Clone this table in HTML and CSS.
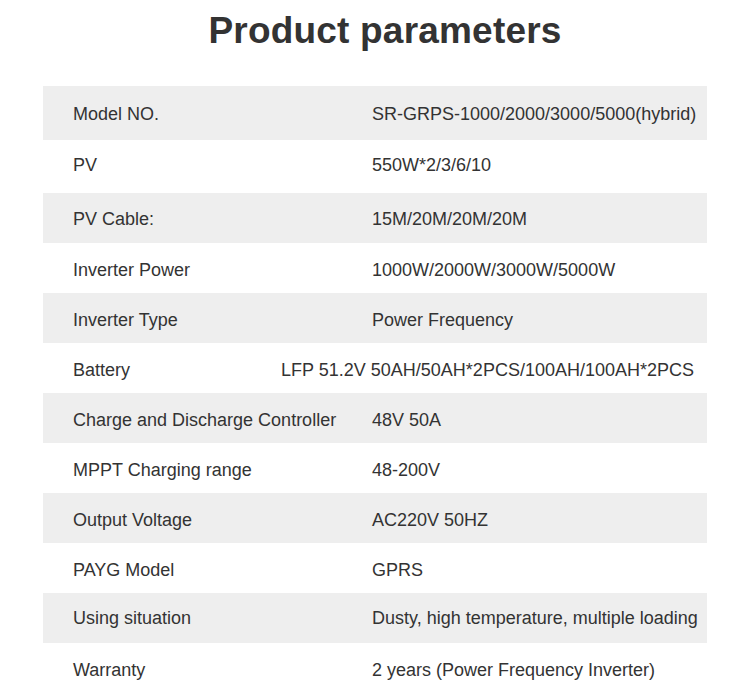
FILE: index.html
```html
<!DOCTYPE html>
<html lang="en">
<head>
<meta charset="utf-8">
<title>Product parameters</title>
<link rel="stylesheet" href="styles.css">
</head>
<body>
<main class="page">
  <h1 class="title">Product parameters</h1>
  <div class="table">
    <div class="row shade r1"><span class="label">Model NO.</span><span class="value">SR-GRPS-1000/2000/3000/5000(hybrid)</span></div>
    <div class="row r2"><span class="label">PV</span><span class="value">550W*2/3/6/10</span></div>
    <div class="row shade r3"><span class="label">PV Cable:</span><span class="value">15M/20M/20M/20M</span></div>
    <div class="row"><span class="label">Inverter Power</span><span class="value">1000W/2000W/3000W/5000W</span></div>
    <div class="row shade"><span class="label">Inverter Type</span><span class="value">Power Frequency</span></div>
    <div class="row wide"><span class="label">Battery</span><span class="value">LFP 51.2V 50AH/50AH*2PCS/100AH/100AH*2PCS</span></div>
    <div class="row shade"><span class="label">Charge and Discharge Controller</span><span class="value">48V 50A</span></div>
    <div class="row"><span class="label">MPPT Charging range</span><span class="value">48-200V</span></div>
    <div class="row shade"><span class="label">Output Voltage</span><span class="value">AC220V 50HZ</span></div>
    <div class="row"><span class="label">PAYG Model</span><span class="value">GPRS</span></div>
    <div class="row shade r11"><span class="label">Using situation</span><span class="value">Dusty, high temperature, multiple loading</span></div>
    <div class="row r12"><span class="label">Warranty</span><span class="value">2 years (Power Frequency Inverter)</span></div>
  </div>
</main>
</body>
</html>
```

FILE: styles.css
```css
* { box-sizing: border-box; }
html, body { margin: 0; padding: 0; background: #ffffff; }
body {
  font-family: "Liberation Sans", Arial, sans-serif;
  color: #333333;
  width: 750px;
  height: 699px;
  overflow: hidden;
}
.page { display: flex; flex-direction: column; align-items: center; }
.title {
  margin: 0;
  padding-top: 9px;
  padding-left: 20px;
  font-size: 37px;
  line-height: 44px;
  letter-spacing: 0.2px;
  font-weight: bold;
  color: #333333;
  text-align: center;
}
.table {
  margin-top: 33px;
  width: 664px;
  display: flex;
  flex-direction: column;
}
.row {
  display: flex;
  align-items: center;
  height: 50px;
  padding-left: 30px;
  padding-top: 4px;
  font-size: 18px;
  color: #333333;
}
.row.r1 { height: 54px; padding-top: 3px; }
.row.r2 { height: 53px; padding-top: 0; padding-bottom: 2px; }
.row.r3 { padding-top: 3px; }
.row.r11 { padding-top: 0; }
.row.r12 { height: 57px; padding-top: 0; padding-bottom: 2px; }
.shade { background: #eeeeee; }
.label { width: 299px; flex-shrink: 0; }
.value { white-space: nowrap; }
.row.wide .label { width: auto; }
.row.wide .value { margin-left: auto; padding-right: 13px; }
```
